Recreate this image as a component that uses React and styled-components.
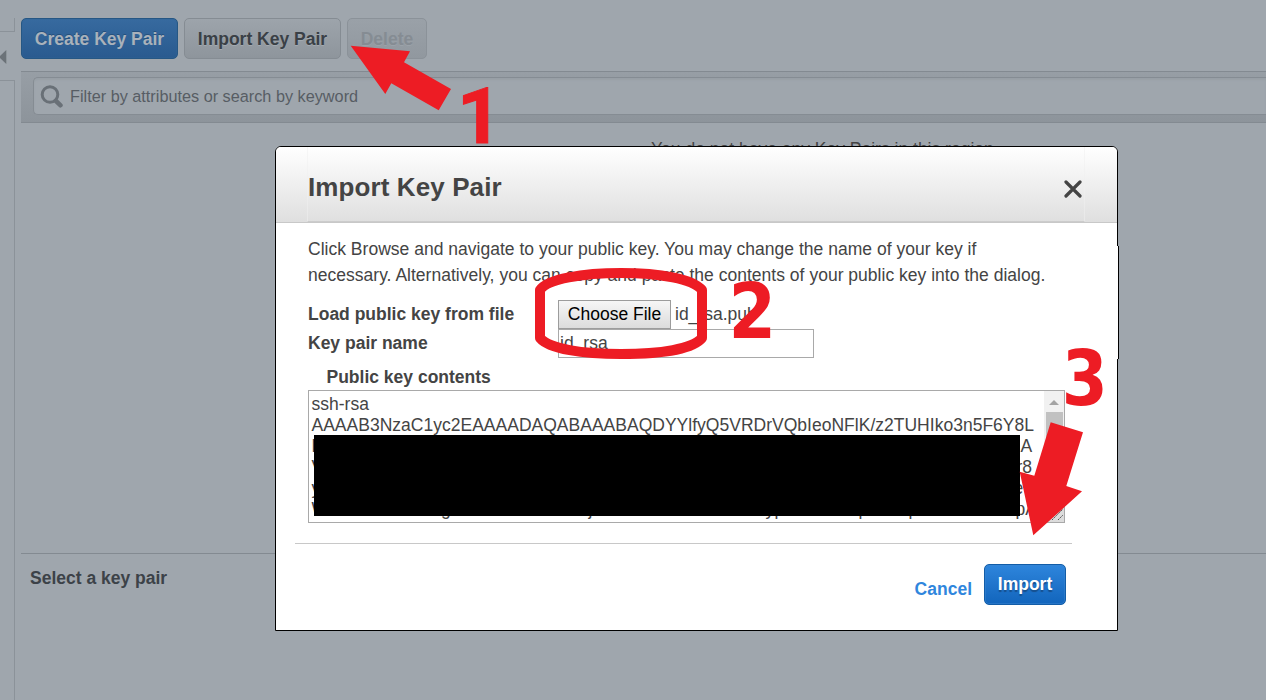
import React from "react";
import styled, { createGlobalStyle, css } from "styled-components";

const Global = createGlobalStyle`
  * { box-sizing: border-box; }
  body {
    margin: 0;
    overflow: hidden;
    background: #9fa6ad;
    font-family: "Liberation Sans", Arial, sans-serif;
    font-size: 17.5px;
    color: #444;
  }
`;

const Page = styled.div`
  position: relative;
  display: flex;
  width: 1266px;
  height: 700px;
  overflow: hidden;
  background: #9fa6ad;
`;

const Sidebar = styled.aside`
  flex: none;
  width: 15px;
  display: flex;
  flex-direction: column;
  padding-top: 18px;
`;
const SidebarTop = styled.div`
  height: 14px;
  border: solid #8b9299;
  border-width: 0 1px 1px 0;
`;
const SidebarToggle = styled.div`
  height: 48px;
  padding-top: 17px;
  line-height: 0;
`;
const SidebarBody = styled.div`
  flex: 1;
  border: solid #8b9299;
  border-width: 1px 1px 0 0;
`;

const Main = styled.main`
  flex: 1;
  display: flex;
  flex-direction: column;
  margin-left: 6px;
`;
const Toolbar = styled.div`
  display: flex;
  gap: 6px;
  height: 71px;
  padding-top: 18px;
`;
const ToolButton = styled.button`
  width: ${(p) => p.$width}px;
  height: 41px;
  padding: 1px 0 0;
  border: 1px solid #858c93;
  border-radius: 5px;
  background: linear-gradient(#9da4ab, #8e959c);
  color: #3a4046;
  font: bold 17.5px "Liberation Sans", Arial, sans-serif;
  text-shadow: 0 1px 0 #a3aab0;
  white-space: nowrap;
  ${(p) =>
    p.$primary &&
    css`
      border-color: #265784;
      background: linear-gradient(#376a9f, #295a8f);
      box-shadow: inset 0 0 0 1px #3266994d;
      color: #a9b2bb;
      text-shadow: 0 -1px 0 #26507c;
    `}
  ${(p) =>
    p.$disabled &&
    css`
      border-color: #8b9299;
      background: linear-gradient(#9aa1a8, #91989f);
      color: #858c93;
      text-shadow: 0 1px 0 #9ba2a9;
    `}
`;
const FilterBar = styled.div`
  height: 52px;
  padding: 5px 0 0 12px;
  border: solid #838a91;
  border-width: 1px 0;
  background: linear-gradient(#979ea5, #8d949b);
`;
const FilterField = styled.div`
  display: flex;
  align-items: center;
  height: 38px;
  padding: 0 0 0 6px;
  border: 1px solid #858c93;
  border-right: 0;
  border-radius: 5px 0 0 5px;
  background: #9fa6ad;
  box-shadow: inset 0 2px 2px #989fa6;
  color: #575d64;
  font-size: 16.25px;
`;
const FilterText = styled.span`
  margin: 0 0 0 7px;
`;
const Results = styled.section`
  height: 431px;
  padding-top: 15px;
  border-bottom: 1px solid #838a91;
  line-height: 22px;
`;
const EmptyText = styled.p`
  margin: 0;
  padding-left: 630px;
`;
const Detail = styled.section`
  padding: 13px 9px;
  color: #3c4248;
  font-weight: bold;
  line-height: 22px;
`;

const Dialog = styled.div`
  position: absolute;
  left: 275px;
  top: 146px;
  width: 843px;
  height: 485px;
  border: 1px solid #000;
  border-radius: 6px 6px 0 0;
  background: #fff;
`;
const EdgeStep = styled.div`
  position: absolute;
  right: -2px;
  top: 99px;
  width: 2px;
  height: 113px;
  background: #fff;
  border-right: 1px solid #000;
`;
const DialogHeader = styled.header`
  height: 76px;
  padding: 0 32px 0 31px;
  border-radius: 5px 5px 0 0;
  border-bottom: 1px solid #c8c8c8;
  background: linear-gradient(#fff, #dfdfdf);
`;
const HeaderInner = styled.div`
  display: flex;
  justify-content: space-between;
  height: 75px;
  border: solid;
  border-width: 0 1px 1px;
  border-color: #ccc #f0f0f088;
`;
const Title = styled.h1`
  margin: 0;
  font-size: 26px;
  line-height: 80px;
  letter-spacing: 0.1px;
`;
const CloseIcon = styled.svg`
  margin: 33px 2px 0 0;
`;
const DialogBody = styled.div`
  padding: 13px 45px 0 32px;
`;
const Intro = styled.p`
  margin: 0 0 12px;
  line-height: 26px;
  letter-spacing: 0.016px;
  white-space: nowrap;
`;
const FormRow = styled.div`
  display: flex;
  height: 29px;
  line-height: 28px;
`;
const Label = styled.label`
  width: 250px;
  font-weight: bold;
`;
const FileButton = styled.button`
  width: 113px;
  height: 29px;
  margin-right: 4px;
  padding: 0;
  border: 1px solid #9c9c9c;
  background: linear-gradient(#f6f6f6, #dcdcdc);
  color: #000;
  font: 17.5px "Liberation Sans", Arial, sans-serif;
`;
const NameField = styled.div`
  width: 256px;
  height: 29px;
  padding-left: 1px;
  border: 1px solid #a9a9a9;
  line-height: 27px;
`;
const ContentsLabel = styled.div`
  height: 32px;
  padding: 9px 0 0 18.5px;
  font-weight: bold;
  line-height: 21px;
`;
const KeyArea = styled.div`
  position: relative;
  display: flex;
  justify-content: space-between;
  width: 757px;
  height: 133px;
  border: 1px solid #a9a9a9;
  overflow: hidden;
`;
const KeyText = styled.div`
  flex: 1;
  padding: 3px 0 0 2.5px;
  line-height: 21px;
  letter-spacing: 0.012px;
  white-space: nowrap;
`;
const KeyLine = styled.div`
  display: flex;
  height: 21px;
`;
const KeyPart = styled.span`
  flex: none;
  width: ${(p) => (p.$width ? `${p.$width}px` : "auto")};
`;
const Redaction = styled.div`
  position: absolute;
  left: 5px;
  top: 44px;
  width: 706px;
  height: 81px;
  background: #000;
`;
const Scrollbar = styled.div`
  flex: none;
  width: 20px;
  background: #f1f1f1;
  display: flex;
  flex-direction: column;
  align-items: center;
`;
const Thumb = styled.div`
  width: 17px;
  height: 52px;
  margin-bottom: auto;
  background: #c1c1c1;
`;
const ScrollArrow = styled.svg`
  margin: 9px 0 7px;
`;
const DialogFooter = styled.footer`
  display: flex;
  justify-content: flex-end;
  width: 777px;
  margin: 20px 0 0 19px;
  padding: 20px 6px 0 0;
  border-top: 1px solid #c8c8c8;
`;
const CancelLink = styled.a`
  margin-right: 12px;
  color: #2f86dd;
  font-weight: bold;
  line-height: 50px;
`;
const ImportButton = styled.button`
  width: 82px;
  height: 41px;
  padding: 0;
  border: 1px solid #125da8;
  border-radius: 5px;
  background: linear-gradient(#2e85dc, #1265bc);
  box-shadow: inset 0 0 0 1px #3a84cf80;
  color: #fff;
  font: bold 17.5px "Liberation Sans", Arial, sans-serif;
  text-shadow: 0 2px 1px #164f8d;
`;
const Marks = styled.svg`
  position: absolute;
  left: 0;
  top: 0;
  fill: #ed1c24;
`;
const Digit = styled.text`
  font: bold ${(p) => p.$size}px ${(p) => p.$family}, sans-serif;
  stroke: #ed1c24;
  stroke-width: ${(p) => p.$stroke || 0}px;
`;

const lastLine = [
  ["W", 129.5],
  ["g", 147.5],
  ["j", 177],
  ["y", 9],
  ["p", 84],
  ["p", 50],
  ["p", 107],
  ["pA", 0],
];

export default function App() {
  return (
    <Page>
      <Global />
      <Sidebar>
        <SidebarTop />
        <SidebarToggle>
          <svg width="7" height="16">
            <path d="M6.300 1V15L-1 8Z" fill="#6b7278" />
          </svg>
        </SidebarToggle>
        <SidebarBody />
      </Sidebar>
      <Main>
        <Toolbar>
          <ToolButton $width={157} $primary>Create Key Pair</ToolButton>
          <ToolButton $width={157}>Import Key Pair</ToolButton>
          <ToolButton $width={80} $disabled>Delete</ToolButton>
        </Toolbar>
        <FilterBar>
          <FilterField>
            <svg width="23" height="24" fill="none" stroke="#697077">
              <circle cx="10" cy="10.500" r="7.800" strokeWidth="3" />
              <path d="M16 17L20.500 21.300" strokeWidth="4.500" strokeLinecap="round" />
            </svg>
            <FilterText>Filter by attributes or search by keyword</FilterText>
          </FilterField>
        </FilterBar>
        <Results>
          <EmptyText>You do not have any Key Pairs in this region.</EmptyText>
        </Results>
        <Detail>Select a key pair</Detail>
      </Main>

      <Dialog>
        <EdgeStep />
        <DialogHeader>
          <HeaderInner>
            <Title>Import Key Pair</Title>
            <CloseIcon width="18" height="18">
              <path d="M2 2L16 16M16 2L2 16" stroke="#444" strokeWidth="3.200" strokeLinecap="round" />
            </CloseIcon>
          </HeaderInner>
        </DialogHeader>
        <DialogBody>
          <Intro>
            Click Browse and navigate to your public key. You may change the name of your key if
            <br />
            necessary. Alternatively, you can copy and paste the contents of your public key into the dialog.
          </Intro>
          <FormRow>
            <Label>Load public key from file</Label>
            <FileButton>Choose File</FileButton>
            <span>id_rsa.pub</span>
          </FormRow>
          <FormRow>
            <Label>Key pair name</Label>
            <NameField>id_rsa</NameField>
          </FormRow>
          <ContentsLabel>Public key contents</ContentsLabel>
          <KeyArea>
            <KeyText>
              <KeyLine>ssh-rsa</KeyLine>
              <KeyLine>AAAAB3NzaC1yc2EAAAADAQABAAABAQDYYlfyQ5VRDrVQbIeoNFlK/z2TUHIko3n5F6Y8L</KeyLine>
              <KeyLine><KeyPart $width={709}>E</KeyPart>A</KeyLine>
              <KeyLine><KeyPart $width={705}>V</KeyPart>r8</KeyLine>
              <KeyLine><KeyPart $width={702}>y</KeyPart>e</KeyLine>
              <KeyLine>
                {lastLine.map(([text, width], i) => (
                  <KeyPart key={i} $width={width}>{text}</KeyPart>
                ))}
              </KeyLine>
            </KeyText>
            <Scrollbar>
              <ScrollArrow width="10" height="5">
                <path d="M0 5L5 0L10 5Z" fill="#a3a3a3" />
              </ScrollArrow>
              <Thumb />
              <svg width="20" height="17">
                <path d="M0 0H20V17H0Z" fill="#dcdcdc" />
                <path d="M8 15L19 4M14 15L19 10" stroke="#555" strokeDasharray="2 1" />
              </svg>
            </Scrollbar>
            <Redaction />
          </KeyArea>
        </DialogBody>
        <DialogFooter>
          <CancelLink>Cancel</CancelLink>
          <ImportButton>Import</ImportButton>
        </DialogFooter>
      </Dialog>

      <Marks width="1266" height="700">
        <path d="M350.700 45.700L410 51.300L404 62.300L451 89L438.700 110.300L391.300 83.300L385.300 94Z" />
        <path d="M1050.700 422.300L1083 432.300L1066.300 486L1082 491.300L1033.300 535.300L1019.700 471.700L1034.300 475.700Z" />
        <path
          d="M540 290C547 279 583 273 621 273C660 273 693 279 702 290V338C693 349 660 354 621 354C583 354 549 349 540 338Z"
          fill="none"
          stroke="#ed1c24"
          strokeWidth="10"
          strokeLinejoin="round"
        />
        <Digit x="457" y="143.200" $family="Roboto" $size={78.5} $stroke={1}>1</Digit>
        <Digit transform="translate(728.600 337.500) scale(.9 1)" $family="'DejaVu Sans'" $size={76}>2</Digit>
        <Digit transform="translate(1061.800 404.800) scale(.87 1)" $family="'DejaVu Sans'" $size={76}>3</Digit>
      </Marks>
    </Page>
  );
}
